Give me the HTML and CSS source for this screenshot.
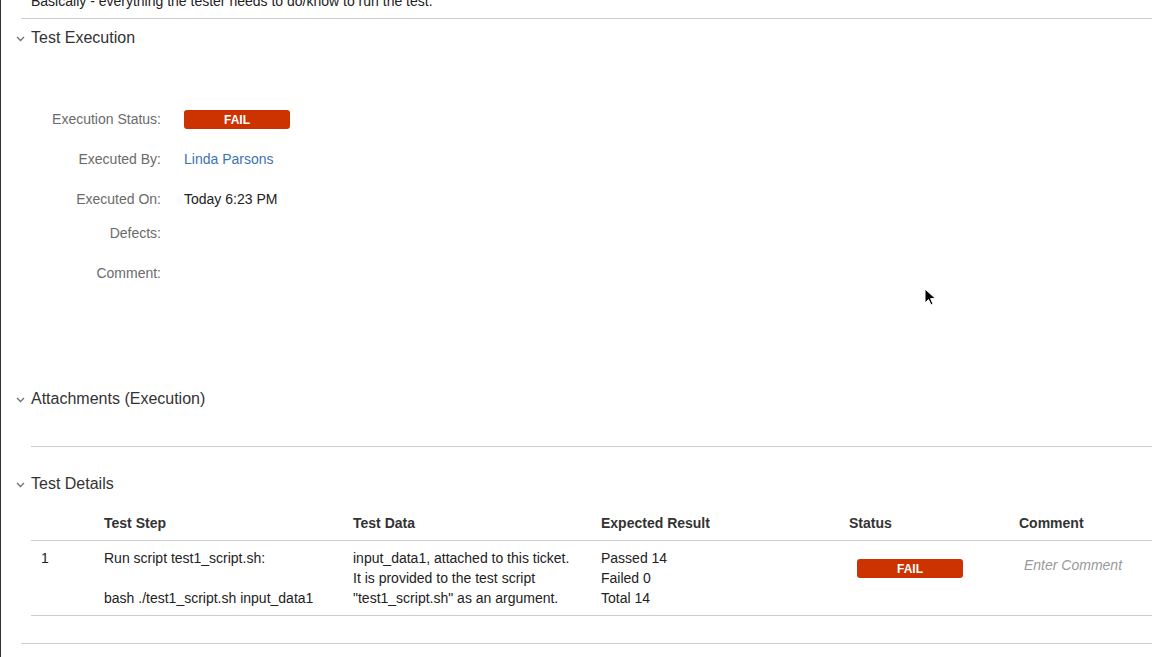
FILE: index.html
```html
<!DOCTYPE html>
<html>
<head>
<meta charset="utf-8">
<link rel="stylesheet" href="styles.css">
</head>
<body>
<div class="page">
  <p class="desc">Basically - everything the tester needs to do/know to run the test.</p>
  <div class="rule rule-wide"></div>

  <div class="section-head">
    <svg class="chev" width="9" height="6" viewBox="0 0 9 6"><path d="M1 1 L4.5 4.5 L8 1" fill="none" stroke="#707070" stroke-width="1.3"/></svg>
    <span>Test Execution</span>
  </div>

  <div class="fields">
    <div class="field"><div class="label">Execution Status:</div><div class="value"><span class="badge">FAIL</span></div></div>
    <div class="field"><div class="label">Executed By:</div><div class="value"><a class="link" href="#">Linda Parsons</a></div></div>
    <div class="field compact"><div class="label">Executed On:</div><div class="value">Today 6:23 PM</div></div>
    <div class="field"><div class="label">Defects:</div><div class="value"></div></div>
    <div class="field"><div class="label">Comment:</div><div class="value"></div></div>
  </div>

  <div class="section-head">
    <svg class="chev" width="9" height="6" viewBox="0 0 9 6"><path d="M1 1 L4.5 4.5 L8 1" fill="none" stroke="#707070" stroke-width="1.3"/></svg>
    <span>Attachments (Execution)</span>
  </div>
  <div class="attach-body"></div>
  <div class="rule rule-inner"></div>

  <div class="section-head details-head">
    <svg class="chev" width="9" height="6" viewBox="0 0 9 6"><path d="M1 1 L4.5 4.5 L8 1" fill="none" stroke="#707070" stroke-width="1.3"/></svg>
    <span>Test Details</span>
  </div>

  <div class="table">
    <div class="trow thead">
      <div class="cell"></div>
      <div class="cell">Test Step</div>
      <div class="cell">Test Data</div>
      <div class="cell">Expected Result</div>
      <div class="cell">Status</div>
      <div class="cell">Comment</div>
    </div>
    <div class="trow tbody">
      <div class="cell">1</div>
      <div class="cell">Run script test1_script.sh:<br><br>bash ./test1_script.sh input_data1</div>
      <div class="cell">input_data1, attached to this ticket.<br>It is provided to the test script<br>"test1_script.sh" as an argument.</div>
      <div class="cell">Passed 14<br>Failed 0<br>Total 14</div>
      <div class="cell"><span class="badge badge-row">FAIL</span></div>
      <div class="cell"><span class="placeholder">Enter Comment</span></div>
    </div>
  </div>
  <div class="rule rule-wide rule-bottom"></div>

  <svg class="cursor" width="14" height="20" viewBox="0 0 14 20"><path d="M1 1 L1 15 L4.5 11.5 L7 17 L9 16 L6.6 10.6 L11.5 10.6 Z" fill="#000" stroke="#fff" stroke-width="1"/></svg>
</div>
</body>
</html>
```

FILE: styles.css
```css
* { box-sizing: border-box; }
html, body { margin: 0; padding: 0; background: #fff; }
body { overflow: hidden; }
.page {
  position: relative;
  width: 1152px;
  height: 657px;
  overflow: hidden;
  border-left: 1px solid #333;
  font-family: "Liberation Sans", Arial, Helvetica, sans-serif;
  font-size: 14px;
  color: #333;
}
.desc {
  margin: -9px 0 0 30px;
  line-height: 20px;
  color: #222;
}
.rule { height: 1px; background: #ccc; }
.rule-wide { margin: 7px 0 0 20px; }
.rule-inner { margin-left: 30px; }
.rule-bottom { margin-top: 27px; }
.section-head {
  display: flex;
  align-items: center;
  gap: 6px;
  height: 20px;
  margin-top: 9px;
  padding-left: 15px;
  font-size: 16px;
  color: #333;
}
.chev { flex: none; margin-top: 1px; }
.fields { margin-top: 61px; margin-bottom: 106px; }
.field {
  display: flex;
  align-items: center;
  height: 20px;
  line-height: 20px;
  margin-bottom: 20px;
}
.field.compact { margin-bottom: 14px; }
.field:last-child { margin-bottom: 0; }
.label {
  width: 160px;
  text-align: right;
  color: #6b6b6b;
}
.value { margin-left: 23px; color: #222; }
.link { color: #3b73af; text-decoration: none; }
.badge {
  display: inline-flex;
  align-items: center;
  justify-content: center;
  width: 106px;
  height: 19px;
  border-radius: 3px;
  background: #cc3300;
  color: #fff;
  font-weight: bold;
  font-size: 12px;
  vertical-align: middle;
}
.attach-body { height: 37px; }
.details-head { margin-top: 27px; }
.table { margin-left: 30px; margin-top: 11px; }
.trow {
  display: grid;
  grid-template-columns: 63px 249px 248px 248px 170px 143px;
  border-bottom: 1px solid #ccc;
  line-height: 20px;
}
.thead { padding: 8px 0 7px; font-weight: bold; color: #333; }
.tbody { padding: 7px 0 7px; color: #222; }
.cell { padding-left: 10px; }
.badge-row { margin: 11px 0 0 8px; display: flex; }
.placeholder {
  display: block;
  margin: 7px 0 0 5px;
  font-style: italic;
  color: #999;
}
.cursor { position: absolute; left: 923px; top: 288px; }
```
